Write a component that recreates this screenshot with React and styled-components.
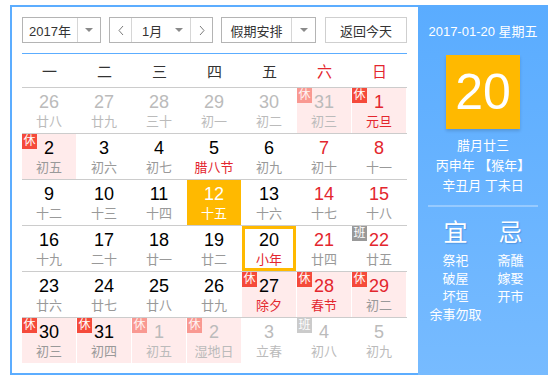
import React from "react"
import styled, { createGlobalStyle } from "styled-components"

const GlobalStyle = createGlobalStyle`
  body {
    margin: 0;
    background: #fff;
    font-family: "Liberation Sans", "Noto Sans CJK SC", sans-serif;
  }
`

const RED = "#e3262e"
const ORANGE = "#ffb900"

const Page = styled.div`
  padding: 5px 0 0 10px;
`

const Widget = styled.div`
  display: flex;
  width: 538px;
  height: 370px;
`

const Main = styled.div`
  width: 408px;
  box-sizing: border-box;
  border: 2px solid #5cadff;
  border-right: none;
  padding: 10px 11px 10px 10px;
  background: #fff;
`

const Toolbar = styled.div`
  display: flex;
  align-items: center;
  gap: 8px;
  padding-bottom: 10px;
  border-bottom: 1px solid #5cadff;
`

const SelectBox = styled.div`
  display: flex;
  height: 26px;
  box-sizing: border-box;
  border: 1px solid #b4b4b4;
  color: #333;
  font-size: 13px;
`

const Part = styled.div`
  width: ${p => p.$w}px;
  display: flex;
  align-items: center;
  justify-content: ${p => p.$justify || "center"};
  padding: ${p => p.$pad || "0"};
  box-sizing: border-box;
  border-left: ${p => (p.$divider ? "1px solid #d6d6d6" : "none")};
`

const Caret = styled.span`
  width: 0;
  height: 0;
  border-left: 4px solid transparent;
  border-right: 4px solid transparent;
  border-top: 4px solid #8a8a8a;
`

const TodayButton = styled.div`
  margin-left: auto;
  width: 82px;
  height: 26px;
  box-sizing: border-box;
  border: 1px solid #cfcfcf;
  display: flex;
  align-items: center;
  justify-content: center;
  font-size: 13px;
  color: #333;
`

const WeekHeader = styled.div`
  display: grid;
  grid-template-columns: repeat(7, 55px);
  height: 33px;
  align-items: center;
  border-bottom: 1px solid #cccccc;
`

const WeekDay = styled.div`
  text-align: center;
  font-size: 15px;
  color: ${p => (p.$weekend ? RED : "#333")};
`

const Week = styled.div`
  display: grid;
  grid-template-columns: repeat(7, 55px);
  border-bottom: 1px solid #cccccc;

  &:last-child {
    border-bottom: none;
  }
`

const Cell = styled.div`
  position: relative;
  width: 54px;
  height: 45px;
  box-sizing: border-box;
  padding-top: 4px;
  text-align: center;
  background: ${p => (p.$sel ? ORANGE : p.$pink ? "#ffebeb" : "transparent")};
  box-shadow: ${p => (p.$today ? `inset 0 0 0 3px ${ORANGE}` : "none")};
`

const DayNum = styled.div`
  font-size: 18px;
  line-height: 20px;
  color: ${p => p.$color};
`

const Lunar = styled.div`
  font-size: 13px;
  line-height: 20px;
  color: ${p => p.$color};
`

const Badge = styled.span`
  position: absolute;
  left: 0;
  top: 0;
  width: 15px;
  height: 15px;
  line-height: 15px;
  font-size: 12px;
  color: #fff;
  text-align: center;
  background: ${p => (p.$kind === "ban" ? "#999" : "#f54a3b")};
  opacity: ${p => (p.$faded ? 0.5 : 1)};
`

const Panel = styled.div`
  width: 130px;
  height: 370px;
  box-sizing: border-box;
  padding-top: 17px;
  background: linear-gradient(#5aacff, #77bbff);
  color: #fff;
  text-align: center;
`

const DateLine = styled.div`
  font-size: 13px;
  line-height: 20px;
`

const BigDay = styled.div`
  width: 74px;
  height: 74px;
  margin: 13px auto 0;
  background: ${ORANGE};
  box-shadow: 0 2px 3px rgba(0, 0, 0, 0.15);
  font-size: 50px;
  line-height: 74px;
`

const LunarInfo = styled.div`
  margin-top: 7px;
  font-size: 13px;
  line-height: 20px;
`

const Divider = styled.div`
  height: 2px;
  margin: 9px 10px 0;
  background: rgba(255, 255, 255, 0.3);
`

const Almanac = styled.div`
  display: grid;
  grid-template-columns: 55px 55px;
  margin: 11px 10px 0;
`

const AlmanacCol = styled.div`
  display: flex;
  flex-direction: column;
  align-items: center;
`

const AlmanacTitle = styled.div`
  font-size: 24px;
  line-height: 30px;
  margin-bottom: 4px;
  text-shadow: 1px 1px 1px rgba(0, 60, 140, 0.25);
`

const AlmanacItem = styled.div`
  font-size: 13px;
  line-height: 18px;
  white-space: nowrap;
`

function Chevron({ dir }) {
  const pts = dir === "left" ? "5,1 1,5.5 5,10" : "1,1 5,5.5 1,10"
  return (
    <svg width="6" height="11" viewBox="0 0 6 11">
      <polyline points={pts} fill="none" stroke="#7a7a7a" strokeWidth="1" />
    </svg>
  )
}

const weekdays = ["一", "二", "三", "四", "五", "六", "日"]

// d: day, l: lunar, o: other month, w: weekend, f: festival, t: tag
const days = [
  { d: 26, l: "廿八", o: 1 }, { d: 27, l: "廿九", o: 1 }, { d: 28, l: "三十", o: 1 },
  { d: 29, l: "初一", o: 1 }, { d: 30, l: "初二", o: 1 }, { d: 31, l: "初三", o: 1, t: "xiu" },
  { d: 1, l: "元旦", w: 1, f: 1, t: "xiu" },

  { d: 2, l: "初五", t: "xiu" }, { d: 3, l: "初六" }, { d: 4, l: "初七" },
  { d: 5, l: "腊八节", f: 1 }, { d: 6, l: "初九" }, { d: 7, l: "初十", w: 1 },
  { d: 8, l: "十一", w: 1 },

  { d: 9, l: "十二" }, { d: 10, l: "十三" }, { d: 11, l: "十四" },
  { d: 12, l: "十五", sel: 1 }, { d: 13, l: "十六" }, { d: 14, l: "十七", w: 1 },
  { d: 15, l: "十八", w: 1 },

  { d: 16, l: "十九" }, { d: 17, l: "二十" }, { d: 18, l: "廿一" },
  { d: 19, l: "廿二" }, { d: 20, l: "小年", f: 1, today: 1 }, { d: 21, l: "廿四", w: 1 },
  { d: 22, l: "廿五", w: 1, t: "ban" },

  { d: 23, l: "廿六" }, { d: 24, l: "廿七" }, { d: 25, l: "廿八" },
  { d: 26, l: "廿九" }, { d: 27, l: "除夕", f: 1, t: "xiu" }, { d: 28, l: "春节", w: 1, f: 1, t: "xiu" },
  { d: 29, l: "初二", w: 1, t: "xiu" },

  { d: 30, l: "初三", t: "xiu" }, { d: 31, l: "初四", t: "xiu" }, { d: 1, l: "初五", o: 1, t: "xiu" },
  { d: 2, l: "湿地日", o: 1, t: "xiu" }, { d: 3, l: "立春", o: 1 }, { d: 4, l: "初八", o: 1, t: "ban" },
  { d: 5, l: "初九", o: 1 },
]

function numColor(day) {
  if (day.sel) return "#fff"
  if (day.o) return "#bbb"
  if (day.w) return RED
  return "#000"
}

function lunarColor(day) {
  if (day.sel) return "#fff"
  if (day.o) return "#bbb"
  if (day.f) return RED
  return "#999"
}

function DayCell({ day }) {
  return (
    <Cell $sel={day.sel} $today={day.today} $pink={day.t === "xiu"}>
      {day.t && (
        <Badge $kind={day.t} $faded={day.o}>
          {day.t === "xiu" ? "休" : "班"}
        </Badge>
      )}
      <DayNum $color={numColor(day)}>{day.d}</DayNum>
      <Lunar $color={lunarColor(day)}>{day.l}</Lunar>
    </Cell>
  )
}

export default function App() {
  const weeks = []
  for (let i = 0; i < days.length; i += 7) weeks.push(days.slice(i, i + 7))

  return (
    <Page>
      <GlobalStyle />
      <Widget>
        <Main>
          <Toolbar>
            <SelectBox>
              <Part $w={54}>2017年</Part>
              <Part $w={23} $divider><Caret /></Part>
            </SelectBox>
            <SelectBox>
              <Part $w={21}><Chevron dir="left" /></Part>
              <Part $w={59} $divider $justify="space-between" $pad="0 7px 0 10px">
                1月 <Caret />
              </Part>
              <Part $w={22} $divider><Chevron dir="right" /></Part>
            </SelectBox>
            <SelectBox>
              <Part $w={69}>假期安排</Part>
              <Part $w={24} $divider><Caret /></Part>
            </SelectBox>
            <TodayButton>返回今天</TodayButton>
          </Toolbar>

          <WeekHeader>
            {weekdays.map((w, i) => (
              <WeekDay key={w} $weekend={i > 4}>{w}</WeekDay>
            ))}
          </WeekHeader>

          {weeks.map((week, i) => (
            <Week key={i}>
              {week.map((day, j) => <DayCell key={j} day={day} />)}
            </Week>
          ))}
        </Main>

        <Panel>
          <DateLine>2017-01-20 星期五</DateLine>
          <BigDay>20</BigDay>
          <LunarInfo>
            <div>腊月廿三</div>
            <div>丙申年 【猴年】</div>
            <div>辛丑月 丁未日</div>
          </LunarInfo>
          <Divider />
          <Almanac>
            <AlmanacCol>
              <AlmanacTitle>宜</AlmanacTitle>
              <AlmanacItem>祭祀</AlmanacItem>
              <AlmanacItem>破屋</AlmanacItem>
              <AlmanacItem>坏垣</AlmanacItem>
              <AlmanacItem>余事勿取</AlmanacItem>
            </AlmanacCol>
            <AlmanacCol>
              <AlmanacTitle>忌</AlmanacTitle>
              <AlmanacItem>斋醮</AlmanacItem>
              <AlmanacItem>嫁娶</AlmanacItem>
              <AlmanacItem>开市</AlmanacItem>
            </AlmanacCol>
          </Almanac>
        </Panel>
      </Widget>
    </Page>
  )
}
